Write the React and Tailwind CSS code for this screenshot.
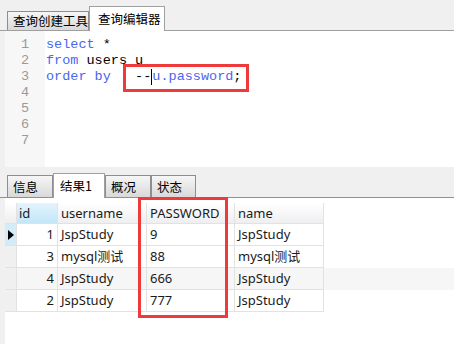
const mono = { fontFamily: '"Liberation Mono", "Courier New", monospace' }

const rows = [
  { id: 1, username: 'JspStudy', password: '9', name: 'JspStudy' },
  { id: 3, username: 'mysql测试', password: '88', name: 'mysql测试' },
  { id: 4, username: 'JspStudy', password: '666', name: 'JspStudy' },
  { id: 2, username: 'JspStudy', password: '777', name: 'JspStudy' },
]

const TopTab = ({ label, active, w }) =>
  active ? (
    <div className={`relative -mb-px h-[25px] ${w} border border-b-0 border-[#a0a0a0] bg-white pl-[8px] pt-[3px] text-[12.5px] leading-[18px] text-black`}>
      {label}
    </div>
  ) : (
    <div className={`h-[19px] ${w} border border-b-0 border-[#8e8e8e] bg-gradient-to-b from-[#f6f6f6] to-[#d9d9d9] pl-[5px] text-[12.5px] leading-[18px] text-black`}>
      {label}
    </div>
  )

const BottomTab = ({ label, active, w }) =>
  active ? (
    <div className={`relative -mb-px h-[25px] ${w} border border-b-0 border-[#a0a0a0] bg-white pl-[6px] pt-[3px] text-[12.5px] leading-[18px] text-black`}>
      {label}
    </div>
  ) : (
    <div className={`h-[22px] ${w} border border-b-0 border-[#8e8e8e] bg-gradient-to-b from-[#f6f6f6] to-[#d9d9d9] pl-[5px] pt-[2px] text-[12.5px] leading-[18px] text-black`}>
      {label}
    </div>
  )

export default function App() {
  return (
    <div
      className="relative flex h-[344px] w-[454px] flex-col overflow-hidden bg-[#f0f0f0]"
      style={{ fontFamily: '"Noto Sans", "Noto Sans CJK SC", sans-serif' }}
    >
      {/* top tabs */}
      <div className="flex h-[31px] items-end border-b border-[#a0a0a0] pl-[7px]" style={{ fontFamily: '"Noto Sans CJK SC", sans-serif' }}>
        <TopTab label="查询创建工具" w="w-[82px]" />
        <TopTab label="查询编辑器" w="w-[76px]" active />
      </div>

      {/* editor */}
      <div className="ml-[5px] flex h-[136px] bg-white text-[13.5px] leading-[16px]" style={mono}>
        <div className="w-[40px] bg-[#f7f7f7] pt-[6px] text-center text-[#9a9a9a]">
          {[1, 2, 3, 4, 5, 6, 7].map((n) => (
            <div key={n} className="h-[16px]">{n}</div>
          ))}
        </div>
        <div className="whitespace-pre pl-[1px] pt-[6px]">
          <div className="h-[16px]"><span className="text-[#4a67f0]">select</span> *</div>
          <div className="h-[16px]"><span className="text-[#4a67f0]">from</span> users u</div>
          <div className="relative h-[16px]">
            <span className="text-[#4a67f0]">order by</span>   --<span className="inline-block h-[16px] w-0 border-l border-black align-top"></span><span className="text-[#4a67f0]">u.password</span>;
          </div>
        </div>
      </div>

      {/* bottom tabs */}
      <div className="mt-[3px] flex h-[28px] items-end border-b border-[#909090] pl-[7px]" style={{ fontFamily: '"Noto Sans CJK SC", sans-serif' }}>
        <BottomTab label="信息" w="w-[46px]" />
        <BottomTab label="结果1" w="w-[52px]" active />
        <BottomTab label="概况" w="w-[46px]" />
        <BottomTab label="状态" w="w-[45px]" />
      </div>

      {/* grid */}
      <div className="ml-[5px] flex-1 bg-white pt-[5px] text-[13px] text-[#1a1a1a]">
        <div className="flex h-[21px] leading-[20px]">
          <div className="w-[12px] border-b border-r border-[#e2e2e2] bg-gradient-to-b from-white to-[#eeeeee]"></div>
          <div className="w-[41px] border-b border-r border-[#e2e2e2] bg-gradient-to-b from-[#e3f4fd] to-[#c3e6f8] pl-[2px]">id</div>
          <div className="w-[89px] border-b border-r border-[#e2e2e2] bg-gradient-to-b from-white to-[#efeff1] pl-[3px]">username</div>
          <div className="w-[88px] border-b border-r border-[#e2e2e2] bg-gradient-to-b from-white to-[#efeff1] pl-[3px]">PASSWORD</div>
          <div className="w-[89px] border-b border-r border-[#e2e2e2] bg-gradient-to-b from-white to-[#efeff1] pl-[3px]">name</div>
        </div>
        {rows.map((r, i) => (
          <div key={i} className={`flex h-[22px] leading-[21px] ${i === 2 ? 'bg-[#f6f6f6]' : 'bg-white'}`}>
            <div className={`flex w-[12px] items-center border-b border-r border-[#e2e2e2] ${i === 0 ? 'bg-[#d3ecfa]' : 'bg-[#f0f0f0]'}`}>
              {i === 0 && (
                <svg width="6" height="10" viewBox="0 0 6 10" className="ml-[3px]">
                  <path d="M0 0 L6 5 L0 10 Z" fill="#000" />
                </svg>
              )}
            </div>
            <div className="w-[41px] border-b border-r border-[#e2e2e2] pr-[3px] text-right">{r.id}</div>
            <div className="w-[89px] border-b border-r border-[#e2e2e2] pl-[3px]">{r.username}</div>
            <div className="w-[88px] border-b border-r border-[#e2e2e2] pl-[3px]">{r.password}</div>
            <div className="w-[89px] border-b border-r border-[#e2e2e2] pl-[3px]">{r.name}</div>
          </div>
        ))}
      </div>

      {/* annotation boxes */}
      <div className="pointer-events-none absolute left-[123px] top-[64px] h-[28px] w-[126px] border-[3px] border-[#ee3a3a]"></div>
      <div className="pointer-events-none absolute left-[138px] top-[197px] h-[121px] w-[90px] border-[3px] border-[#ee3a3a]"></div>
    </div>
  )
}
